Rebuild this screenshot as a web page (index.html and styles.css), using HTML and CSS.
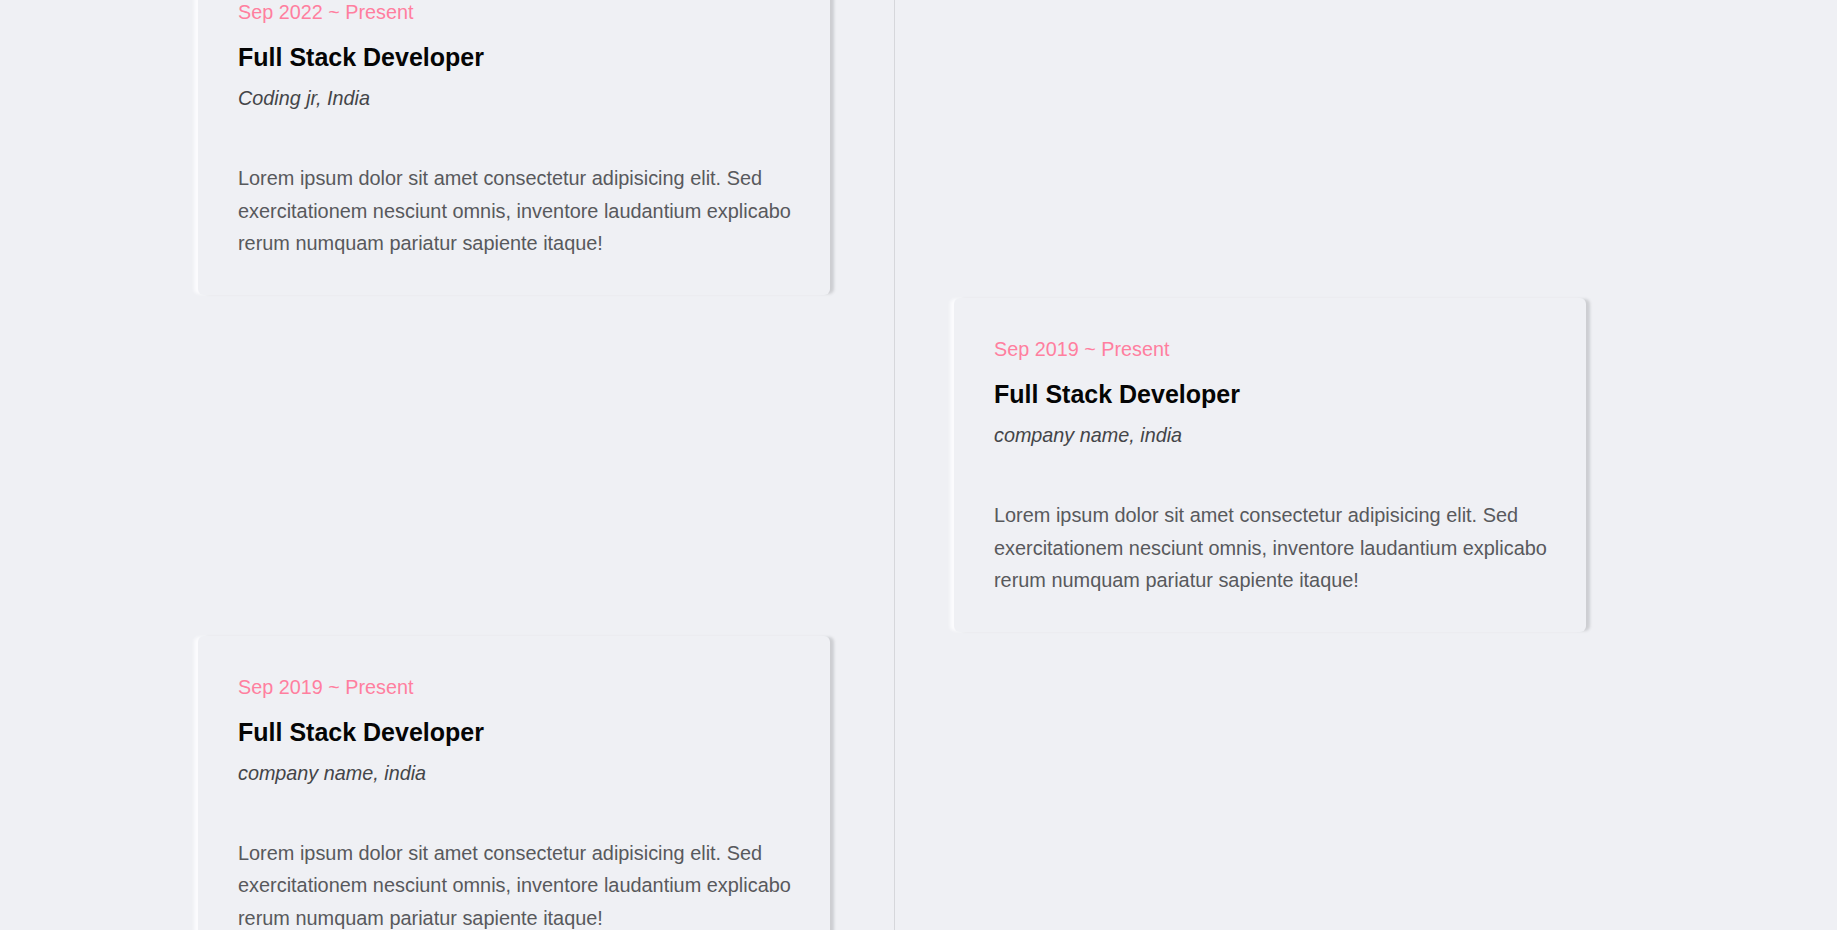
FILE: index.html
```html
<!DOCTYPE html>
<html lang="en">
<head>
<meta charset="utf-8">
<title>Experience Timeline</title>
<link rel="stylesheet" href="styles.css">
</head>
<body>
<section class="timeline">
  <article class="card card-left">
    <p class="date">Sep 2022 ~ Present</p>
    <h3 class="role">Full Stack Developer</h3>
    <p class="company">Coding jr, India</p>
    <p class="desc">Lorem ipsum dolor sit amet consectetur adipisicing elit. Sed exercitationem nesciunt omnis, inventore laudantium explicabo rerum numquam pariatur sapiente itaque!</p>
  </article>
  <article class="card card-right">
    <p class="date">Sep 2019 ~ Present</p>
    <h3 class="role">Full Stack Developer</h3>
    <p class="company">company name, india</p>
    <p class="desc">Lorem ipsum dolor sit amet consectetur adipisicing elit. Sed exercitationem nesciunt omnis, inventore laudantium explicabo rerum numquam pariatur sapiente itaque!</p>
  </article>
  <article class="card card-left">
    <p class="date">Sep 2019 ~ Present</p>
    <h3 class="role">Full Stack Developer</h3>
    <p class="company">company name, india</p>
    <p class="desc">Lorem ipsum dolor sit amet consectetur adipisicing elit. Sed exercitationem nesciunt omnis, inventore laudantium explicabo rerum numquam pariatur sapiente itaque!</p>
  </article>
</section>
</body>
</html>
```
FILE: styles.css
```css
html {
  overflow: hidden;
}

body {
  margin: 0;
  background: #eff0f4;
  font-family: "Liberation Sans", Arial, sans-serif;
  min-height: 930px;
}

.timeline {
  position: relative;
  width: 1392px;
  margin-left: 198px;
  margin-top: -39px;
  display: flex;
  flex-direction: column;
  gap: 3.5px;
  padding-bottom: 200px;
}

.timeline::before {
  content: "";
  position: absolute;
  left: 696px;
  top: 0;
  bottom: 0;
  width: 1px;
  background: #d6d7db;
}

.card {
  width: 632px;
  box-sizing: border-box;
  padding: 40px 26px 35px 40px;
  background: #eff0f4;
  border-radius: 6px;
  box-shadow: 5px 0 3px -1px #cdced2, -5px 0 3px -1px #fbfbfd;
}

.card-right {
  margin-left: 756px;
}

.date {
  margin: 0;
  font-size: 19.8px;
  line-height: 23px;
  color: #ff7f9f;
}

.role {
  margin: 19px 0 0;
  font-size: 25px;
  line-height: 29px;
  font-weight: 700;
  color: #050505;
}

.company {
  margin: 15px 0 0;
  font-size: 19.8px;
  line-height: 23px;
  font-style: italic;
  color: #444548;
}

.desc {
  margin: 52px 0 0;
  font-size: 19.9px;
  line-height: 32.6px;
  color: #58595c;
}
```
